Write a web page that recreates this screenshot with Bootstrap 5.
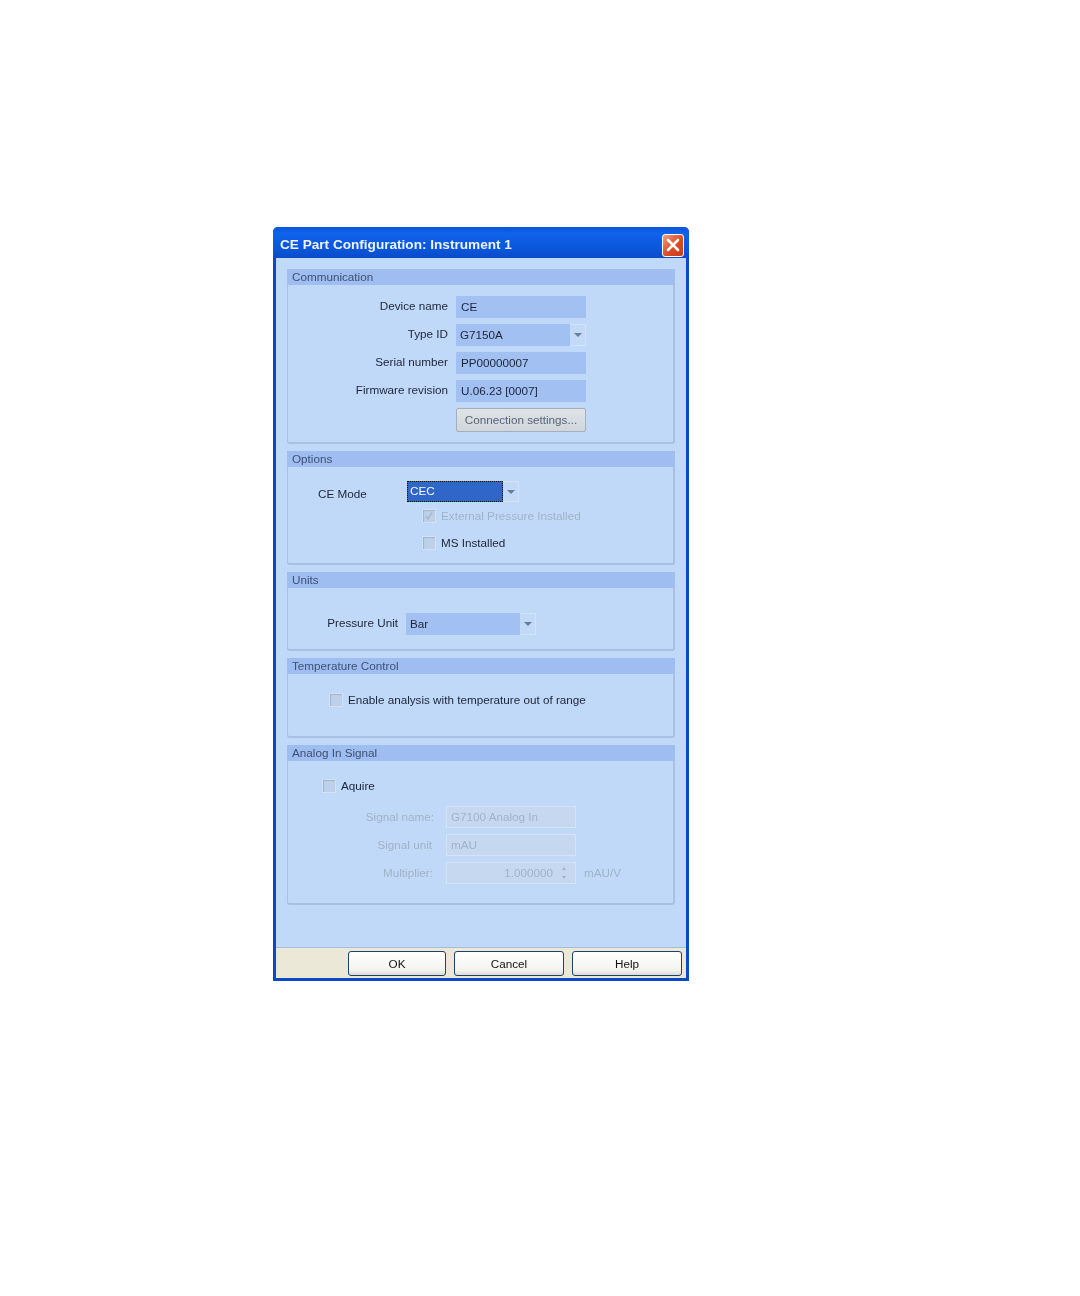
<!DOCTYPE html>
<html lang="en">
<head>
<meta charset="utf-8">
<title>CE Part Configuration</title>
<link href="https://cdn.jsdelivr.net/npm/bootstrap@5.3.0/dist/css/bootstrap.min.css" rel="stylesheet">
<style>
body{background:#fff;font-family:"Liberation Sans",Arial,sans-serif;font-size:11.7px;color:#1c2438;}
.page{padding:227px 0 0 273px;}
.win{width:416px;height:754px;border:3px solid #0a49c8;border-top:0;border-radius:5px 5px 0 0;background:#c1d9f8;filter:blur(.35px);}
.ttl{height:31px;margin:0 -3px;padding:5px 5px 0 7px;border-radius:5px 5px 0 0;background:linear-gradient(#0a55dc,#0f63ea 20%,#0a56dc 70%,#0a4bc8);color:#eef3ff;font-weight:700;font-size:13.6px;}
.xbtn{width:22px;height:23px;border:1px solid #fff;border-radius:3px;background:linear-gradient(135deg,#f0a080,#dc4a20 55%,#c83c18);}
.pane{height:689px;padding:11px 11px 0 11px;}
.grp{border:1px solid #a8c0e4;border-top:0;border-right-width:2px;border-bottom-width:2px;border-radius:0 0 3px 3px;margin-bottom:7px;}
.ghd{height:16px;line-height:16px;margin:0 -2px 0 -1px;padding-left:5px;background:#9fbdf1;color:#3c5272;}
.fld{width:130px;height:22px;background:#a2c0f2;color:#1c2438;padding:2px 5px 0;}
.fld.cmb{padding:0 0 0 4px;}
.arrow{width:16px;height:100%;background:#c3d9f8;border:1px solid #d3e3fa;border-left:0;}
.tri{width:0;height:0;border:4px solid transparent;border-top:4px solid #64809f;border-bottom:0;}
.lbl{width:168px;text-align:right;padding:0 8px 2px 0;}
.rw{height:22px;margin-bottom:6px;}
.cbtn{width:130px;height:24px;padding:0;font-size:11.7px;line-height:1;color:#566478;background:linear-gradient(#dfe3e6,#cfd6dc);border:1px solid #a3afba;border-radius:2px;}
.cbx{width:14px;height:14px;flex:none;border:1px solid #d3e1f2;background:#bcd0ea;box-shadow:inset 1px 1px 1px #9fb4d0;}
.ctx{margin-left:5px;}
.dim{color:#a1b2c8;}
.bcom{height:157px;padding-top:11px;}
.bopt{height:96px;}
.bmode{padding:14px 0 0 30px;}
.modelbl{width:89px;padding-top:4px;}
.modebox{width:112px;height:21px;background:#2f66c8;color:#fff;}
.modein{border:1px dotted #111;padding-left:2px;line-height:17px;}
.optext{padding:7px 0 0 134px;height:20px;}
.opms{padding:14px 0 0 134px;height:27px;}
.bunit{height:61px;padding-top:11px;}
.ulbl{width:118px;padding:0 8px 2px 0;text-align:right;}
.btmp{height:62px;padding:17px 0 0 41px;}
.bana{height:142px;}
.aq{padding:16px 0 0 34px;height:45px;}
.arw{height:22px;margin-bottom:6px;}
.arw3{height:22px;}
.al1{width:147px;padding-right:1px;text-align:right;}
.al2{width:145px;padding-right:1px;text-align:right;}
.al3{width:146px;padding-right:1px;text-align:right;}
.dfld{width:130px;height:22px;background:#c5d8f0;border:1px solid #d6e3f5;color:#a1b2c8;padding:0 4px;}
.m11{margin-left:11px;}.m13{margin-left:13px;}.m12{margin-left:12px;padding-right:8px;}
.foot{height:31px;background:#ebe8d8;border-top:1px solid #a6bcd8;padding:3px 4px 0 0;}
.wbtn{height:25px;padding:0;font-size:11.7px;line-height:1;color:#111;background:linear-gradient(#fff,#f3f3ee 80%,#dcdcd2);border:1px solid #1f3f6e;border-radius:3px;}
.w98{width:98px;}.w110{width:110px;}
</style>
</head>
<body>
<div class="page">
  <div class="win">
    <div class="ttl d-flex align-items-center justify-content-between">
      <span>CE Part Configuration: Instrument 1</span>
      <span class="xbtn d-flex align-items-center justify-content-center">
        <svg width="14" height="14" viewBox="0 0 14 14"><path d="M2 2L12 12M12 2L2 12" stroke="#fff" stroke-width="2.6" stroke-linecap="round"/></svg>
      </span>
    </div>
    <div class="pane">
      <div class="grp">
        <div class="ghd">Communication</div>
        <div class="bcom">
          <div class="rw d-flex align-items-center"><div class="lbl">Device name</div><div class="fld">CE</div></div>
          <div class="rw d-flex align-items-center"><div class="lbl">Type ID</div><div class="fld cmb d-flex align-items-center justify-content-between"><span>G7150A</span><span class="arrow d-flex align-items-center justify-content-center"><span class="tri"></span></span></div></div>
          <div class="rw d-flex align-items-center"><div class="lbl">Serial number</div><div class="fld">PP00000007</div></div>
          <div class="rw d-flex align-items-center"><div class="lbl">Firmware revision</div><div class="fld">U.06.23 [0007]</div></div>
          <div class="d-flex"><div class="lbl"></div><button class="btn cbtn" type="button">Connection settings...</button></div>
        </div>
      </div>

      <div class="grp">
        <div class="ghd">Options</div>
        <div class="bopt">
          <div class="bmode d-flex align-items-start">
            <div class="modelbl">CE Mode</div>
            <div class="modebox d-flex">
              <div class="modein flex-grow-1">CEC</div>
              <span class="arrow d-flex align-items-center justify-content-center"><span class="tri"></span></span>
            </div>
          </div>
          <div class="optext d-flex align-items-center"><span class="cbx d-flex align-items-center justify-content-center"><svg width="10" height="10" viewBox="0 0 10 10"><path d="M2 5L4 8L8 1.500" fill="none" stroke="#a9b9cc" stroke-width="1.600"/></svg></span><span class="dim ctx">External Pressure Installed</span></div>
          <div class="opms d-flex align-items-center"><span class="cbx"></span><span class="ctx">MS Installed</span></div>
        </div>
      </div>

      <div class="grp">
        <div class="ghd">Units</div>
        <div class="bunit d-flex align-items-center align-self-start">
          <div class="ulbl">Pressure Unit</div>
          <div class="fld cmb d-flex align-items-center justify-content-between"><span>Bar</span><span class="arrow d-flex align-items-center justify-content-center"><span class="tri"></span></span></div>
        </div>
      </div>

      <div class="grp">
        <div class="ghd">Temperature Control</div>
        <div class="btmp"><div class="d-flex align-items-center"><span class="cbx"></span><span class="ctx">Enable analysis with temperature out of range</span></div></div>
      </div>

      <div class="grp">
        <div class="ghd">Analog In Signal</div>
        <div class="bana">
          <div class="aq"><div class="d-flex align-items-center"><span class="cbx"></span><span class="ctx">Aquire</span></div></div>
          <div class="arw d-flex align-items-center dim"><div class="al1">Signal name:</div><div class="dfld m11 d-flex align-items-center">G7100 Analog In</div></div>
          <div class="arw d-flex align-items-center dim"><div class="al2">Signal unit</div><div class="dfld m13 d-flex align-items-center">mAU</div></div>
          <div class="arw3 d-flex align-items-center dim"><div class="al3">Multiplier:</div><div class="dfld m12 d-flex align-items-center justify-content-end"><span>1.000000</span><svg class="ms-2" width="6" height="14" viewBox="0 0 6 14"><path d="M3 1L5 4H1ZM3 13L1 10H5Z" fill="#a1b2c8"/></svg></div><span class="ms-2">mAU/V</span></div>
        </div>
      </div>
    </div>
    <div class="foot d-flex justify-content-end gap-2">
      <button class="btn wbtn w98" type="button">OK</button>
      <button class="btn wbtn w110" type="button">Cancel</button>
      <button class="btn wbtn w110" type="button">Help</button>
    </div>
  </div>
</div>
<script src="https://cdn.jsdelivr.net/npm/bootstrap@5.3.0/dist/js/bootstrap.bundle.min.js"></script>
</body>
</html>
